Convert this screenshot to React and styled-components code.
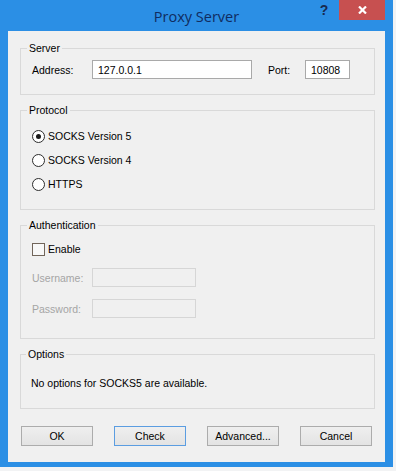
import React from "react";
import styled, { createGlobalStyle } from "styled-components";

const GlobalStyle = createGlobalStyle`
  body {
    margin: 0;
    background: #f2f3f4;
    font-family: "Liberation Sans", Arial, sans-serif;
  }
`;

const DialogWindow = styled.div`
  width: 393px;
  height: 467px;
  box-sizing: border-box;
  background: #2b8fe5;
  padding: 0 8px 5px 8px;
  display: flex;
  flex-direction: column;
`;

const TitleBar = styled.div`
  height: 31px;
  position: relative;
  display: flex;
  align-items: center;
  justify-content: center;
`;

const Title = styled.div`
  font-family: "Open Sans", "Noto Sans", sans-serif;
  font-size: 14.5px;
  color: #102c60;
  padding-top: 1px;
`;

const Controls = styled.div`
  position: absolute;
  top: 0;
  right: 0;
  display: flex;
`;

const HelpButton = styled.div`
  width: 30px;
  height: 20px;
  display: flex;
  align-items: center;
  justify-content: center;
  font-family: "Liberation Sans", Arial, sans-serif;
  font-weight: 700;
  font-size: 14px;
  color: #182b50;
`;

const CloseButton = styled.div`
  width: 46px;
  height: 20px;
  background: #c75050;
  display: flex;
  align-items: center;
  justify-content: center;
`;

const Client = styled.div`
  flex: 1;
  background: #f0f0f0;
  padding: 11px 10px 0 12px;
  display: flex;
  flex-direction: column;
  font-size: 10.5px;
  color: #000;
`;

const GroupBox = styled.fieldset`
  margin: 0;
  border: 1px solid #d9d9d9;
  padding: ${(p) => p.$pad};
  min-width: 0;
  & + & {
    margin-top: ${(p) => p.$gap || "8px"};
  }
`;

const Legend = styled.legend`
  padding: 0 2px;
  margin-left: -5px;
  line-height: 13px;
`;

const Row = styled.div`
  display: flex;
  align-items: center;
  height: ${(p) => p.$h || "auto"};
  margin-top: ${(p) => p.$mt || "0"};
`;

const FieldLabel = styled.label`
  width: ${(p) => p.$w};
  flex: none;
  color: ${(p) => (p.$disabled ? "#a5a5a5" : "#000")};
  margin-left: ${(p) => p.$ml || "0"};
`;

const TextBox = styled.input`
  width: ${(p) => p.$w};
  height: 19px;
  box-sizing: border-box;
  border: 1px solid ${(p) => (p.disabled ? "#d6d6d6" : "#a9a9a9")};
  background: ${(p) => (p.disabled ? "#f0f0f0" : "#fff")};
  padding: 0 5px;
  margin: 0;
  font-family: inherit;
  font-size: 10.5px;
  color: #000;
  outline: none;
`;

const RadioCircle = styled.span`
  width: 13px;
  height: 13px;
  box-sizing: border-box;
  border-radius: 50%;
  border: 1px solid #2d2d2d;
  background: #fff;
  display: flex;
  align-items: center;
  justify-content: center;
  margin-right: 3px;
  &::after {
    content: "";
    width: 5px;
    height: 5px;
    border-radius: 50%;
    background: ${(p) => (p.$checked ? "#1a1a1a" : "transparent")};
  }
`;

const CheckBox = styled.span`
  width: 13px;
  height: 13px;
  box-sizing: border-box;
  border: 1px solid #71655a;
  background: #f8f8f8;
  margin-right: 3px;
`;

const InfoText = styled.div`
  line-height: 13px;
`;

const ButtonRow = styled.div`
  display: flex;
  justify-content: space-between;
  margin: 17px 3px 0 1px;
`;

const Button = styled.button`
  width: 72px;
  height: 20px;
  box-sizing: border-box;
  margin: 0;
  padding: 0;
  border: 1px solid ${(p) => (p.$default ? "#5b9de1" : "#acacac")};
  background: linear-gradient(#efefef, #e3e3e3);
  font-family: inherit;
  font-size: 10.5px;
  color: #000;
`;

const protocols = [
  { label: "SOCKS Version 5", checked: true },
  { label: "SOCKS Version 4" },
  { label: "HTTPS" },
];

export default function App() {
  return (
    <>
      <GlobalStyle />
      <DialogWindow>
        <TitleBar>
          <Title>Proxy Server</Title>
          <Controls>
            <HelpButton>?</HelpButton>
            <CloseButton>
              <svg width="9" height="8" viewBox="0 0 9 8">
                <path d="M1 0.5 L8 7.5 M8 0.5 L1 7.5" stroke="#fff" strokeWidth="2.2" />
              </svg>
            </CloseButton>
          </Controls>
        </TitleBar>
        <Client>
          <GroupBox $pad="5px 10px 15px 11px">
            <Legend>Server</Legend>
            <Row>
              <FieldLabel $w="60px">Address:</FieldLabel>
              <TextBox $w="160px" defaultValue="127.0.0.1" />
              <FieldLabel $w="37px" $ml="16px">Port:</FieldLabel>
              <TextBox $w="45px" defaultValue="10808" />
            </Row>
          </GroupBox>

          <GroupBox $pad="7px 10px 13px 11px">
            <Legend>Protocol</Legend>
            {protocols.map((p) => (
              <Row key={p.label} $h="24px">
                <RadioCircle $checked={p.checked} />
                {p.label}
              </Row>
            ))}
          </GroupBox>

          <GroupBox $pad="9px 10px 20px 11px" $gap="9px">
            <Legend>Authentication</Legend>
            <Row $h="16px">
              <CheckBox />
              Enable
            </Row>
            <Row $mt="11px">
              <FieldLabel $w="60px" $disabled>Username:</FieldLabel>
              <TextBox $w="104px" disabled />
            </Row>
            <Row $mt="12px">
              <FieldLabel $w="60px" $disabled>Password:</FieldLabel>
              <TextBox $w="104px" disabled />
            </Row>
          </GroupBox>

          <GroupBox $pad="16px 10px 18px 10px" $gap="9px">
            <Legend>Options</Legend>
            <InfoText>No options for SOCKS5 are available.</InfoText>
          </GroupBox>

          <ButtonRow>
            <Button>OK</Button>
            <Button $default>Check</Button>
            <Button>Advanced...</Button>
            <Button>Cancel</Button>
          </ButtonRow>
        </Client>
      </DialogWindow>
    </>
  );
}
